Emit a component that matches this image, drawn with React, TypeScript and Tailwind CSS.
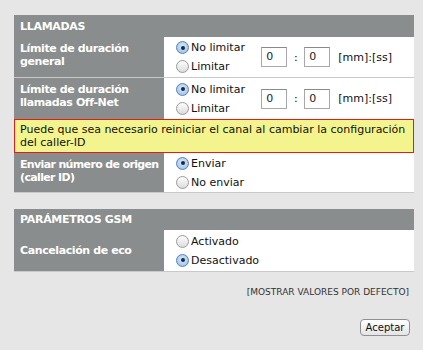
import { useState } from 'react';

const font = { fontFamily: '"DejaVu Sans", Verdana, sans-serif' };

function Radio({ checked, label, onClick }: { checked: boolean; label: string; onClick: () => void }) {
  return (
    <div className="flex items-center h-[19px] cursor-pointer" onClick={onClick}>
      <span
        className={`w-[13px] h-[13px] rounded-full border flex items-center justify-center mr-[2px] ${
          checked ? 'border-[#5a7fb5] bg-[radial-gradient(circle_at_50%_40%,#d9ecff,#8fbbe8)]' : 'border-[#9a9a9a] bg-[linear-gradient(#fdfdfd,#dcdcdc)]'
        }`}
      >
        {checked && <span className="w-[4px] h-[4px] rounded-full bg-[#1d2a3a]" />}
      </span>
      <span className="text-[#111]">{label}</span>
    </div>
  );
}

function TimeInput() {
  return (
    <div className="flex items-center ml-auto mr-[22px]">
      <div className="w-[26px] h-[20px] border border-[#a8a8a8] border-t-[#8a8a8a] bg-white pl-[4px] leading-[18px] text-[#222]">0</div>
      <span className="w-[17px] text-center">:</span>
      <div className="w-[26px] h-[20px] border border-[#a8a8a8] border-t-[#8a8a8a] bg-white pl-[4px] leading-[18px] text-[#222]">0</div>
      <span className="ml-[8px] text-[#111]">[mm]:[ss]</span>
    </div>
  );
}

export default function App() {
  const [general, setGeneral] = useState(true);
  const [offnet, setOffnet] = useState(true);
  const [enviar, setEnviar] = useState(true);
  const [eco, setEco] = useState(false);

  return (
    <div className="w-[423px] h-[350px] bg-[#e6e6e6] pt-[15px] text-[11px] leading-[13px]" style={font}>
      <div className="mx-[14px] w-[400px]">
        <div className="bg-[#8a8d8d] h-[22px] flex items-center px-[6px] font-bold text-white tracking-[-0.3px]">LLAMADAS</div>

        <div className="flex h-[41px] border-b border-[#c9c9c9]">
          <div className="w-[150px] bg-[#8a8d8d] pl-[6px] pt-[5px] font-bold text-white tracking-[-0.4px]">Límite de duración general</div>
          <div className="flex-1 bg-white flex items-center pl-[12px]">
            <div>
              <Radio checked={general} label="No limitar" onClick={() => setGeneral(true)} />
              <Radio checked={!general} label="Limitar" onClick={() => setGeneral(false)} />
            </div>
            <TimeInput />
          </div>
        </div>

        <div className="flex h-[41px]">
          <div className="w-[150px] bg-[#8a8d8d] pl-[6px] pt-[5px] font-bold text-white tracking-[-0.4px]">Límite de duración llamadas Off-Net</div>
          <div className="flex-1 bg-white flex items-center pl-[12px]">
            <div>
              <Radio checked={offnet} label="No limitar" onClick={() => setOffnet(true)} />
              <Radio checked={!offnet} label="Limitar" onClick={() => setOffnet(false)} />
            </div>
            <TimeInput />
          </div>
        </div>

        <div className="bg-[#f4f48e] border border-[#e41b17] px-[5px] py-[3px] text-[#111]">
          Puede que sea necesario reiniciar el canal al cambiar la configuración del caller-ID
        </div>

        <div className="flex h-[40px] border-b border-[#c9c9c9]">
          <div className="w-[150px] bg-[#8a8d8d] pl-[6px] pt-[5px] font-bold text-white tracking-[-0.65px] whitespace-nowrap overflow-hidden">
            Enviar número de origen
            <br />
            (caller ID)
          </div>
          <div className="flex-1 bg-white flex items-center pl-[12px]">
            <div>
              <Radio checked={enviar} label="Enviar" onClick={() => setEnviar(true)} />
              <Radio checked={!enviar} label="No enviar" onClick={() => setEnviar(false)} />
            </div>
          </div>
        </div>

        <div className="mt-[16px] bg-[#8a8d8d] h-[21px] flex items-center px-[6px] font-bold text-white tracking-[-0.3px]">PARÁMETROS GSM</div>
        <div className="flex h-[42px] border-b border-[#c9c9c9]">
          <div className="w-[150px] bg-[#8a8d8d] pl-[6px] flex items-center font-bold text-white tracking-[-0.4px]">Cancelación de eco</div>
          <div className="flex-1 bg-white flex items-center pl-[12px]">
            <div>
              <Radio checked={eco} label="Activado" onClick={() => setEco(true)} />
              <Radio checked={!eco} label="Desactivado" onClick={() => setEco(false)} />
            </div>
          </div>
        </div>

        <div className="flex justify-end mt-[14px] pr-[5px]">
          <a className="text-[9px] text-[#333] cursor-pointer">[MOSTRAR VALORES POR DEFECTO]</a>
        </div>

        <div className="flex justify-end mt-[20px] pr-[4px]">
          <button className="h-[17px] w-[50px] rounded-[4px] border border-[#8f8f8f] bg-[linear-gradient(#ffffff,#e4e4e4)] text-[10px] text-[#111] leading-[15px]">
            Aceptar
          </button>
        </div>
      </div>
    </div>
  );
}
